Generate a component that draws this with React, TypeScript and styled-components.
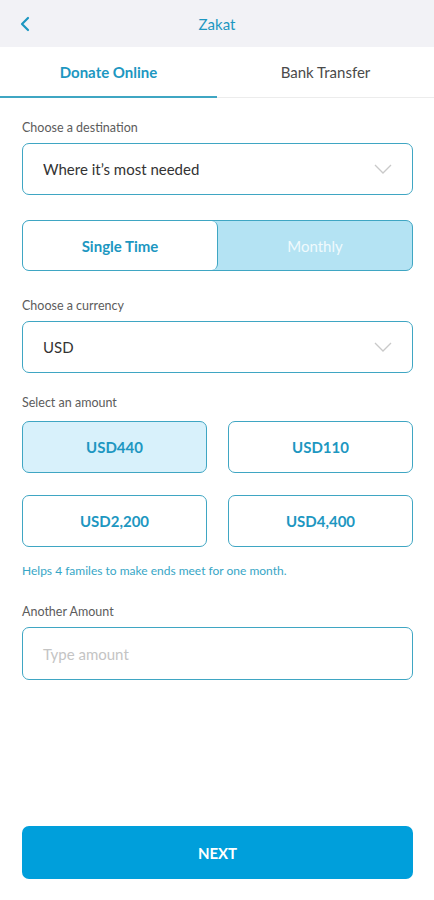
import { createGlobalStyle, styled } from 'styled-components';

const GlobalStyle = createGlobalStyle`
  html, body {
    margin: 0;
    padding: 0;
    background: #fff;
  }
  body {
    font-family: 'Lato', 'Liberation Sans', sans-serif;
    -webkit-font-smoothing: antialiased;
  }
`;

const teal = '#3fa6c3';
const tealText = '#1d97c1';

const Screen = styled.div`
  width: 434px;
  height: 900px;
  display: flex;
  flex-direction: column;
  background: #fff;
`;

const TopBar = styled.header`
  height: 47px;
  background: #f2f2f6;
  display: grid;
  grid-template-columns: 56px 1fr 56px;
  align-items: center;
`;

const BackButton = styled.button`
  border: 0;
  background: none;
  padding: 0 0 0 20px;
  display: flex;
  align-items: center;
`;

const Title = styled.h1`
  margin: 0;
  text-align: center;
  font-size: 15px;
  font-weight: 400;
  color: ${tealText};
`;

const Tabs = styled.nav`
  display: flex;
  height: 50px;
  border-bottom: 1px solid #ececec;
`;

const Tab = styled.div<{ $active?: boolean }>`
  flex: 1;
  display: flex;
  align-items: center;
  justify-content: center;
  font-size: 15px;
  font-weight: ${p => (p.$active ? 700 : 400)};
  color: ${p => (p.$active ? tealText : '#4a4a4a')};
  border-bottom: 2px solid ${p => (p.$active ? teal : 'transparent')};
  margin-bottom: -1px;
`;

const Body = styled.main`
  flex: 1;
  display: flex;
  flex-direction: column;
  padding: 22px 21px 21px 22px;
`;

const Label = styled.div<{ $top?: number; $gap?: number }>`
  font-size: 12.5px;
  color: #5c5c5c;
  margin-top: ${p => p.$top ?? 0}px;
  margin-bottom: ${p => p.$gap ?? 8}px;
  line-height: 15px;
`;

const Field = styled.div<{ $tall?: boolean }>`
  height: ${p => (p.$tall ? 53 : 52)}px;
  box-sizing: border-box;
  border: 1.5px solid ${teal};
  border-radius: 7px;
  display: flex;
  align-items: center;
  justify-content: space-between;
  padding: 0 20px;
  font-size: 15px;
  color: #333;
`;

const Placeholder = styled.span`
  color: #c4c4c4;
`;

const Toggle = styled.div`
  margin-top: 25px;
  height: 51px;
  box-sizing: border-box;
  border: 1.5px solid ${teal};
  border-radius: 7px;
  background: #b4e3f3;
  display: flex;
  overflow: hidden;
`;

const ToggleOption = styled.div<{ $active?: boolean }>`
  flex: 1;
  display: flex;
  align-items: center;
  justify-content: center;
  font-size: 15px;
  font-weight: ${p => (p.$active ? 700 : 400)};
  color: ${p => (p.$active ? tealText : '#f0fafd')};
  background: ${p => (p.$active ? '#fff' : 'transparent')};
  border-right: ${p => (p.$active ? `1.5px solid ${teal}` : 'none')};
  border-radius: ${p => (p.$active ? '6px' : '0')};
`;

const AmountGrid = styled.div`
  display: grid;
  grid-template-columns: 1fr 1fr;
  column-gap: 21px;
  row-gap: 22px;
`;

const AmountButton = styled.div<{ $selected?: boolean }>`
  height: 52px;
  box-sizing: border-box;
  border: 1.5px solid ${teal};
  border-radius: 7px;
  background: ${p => (p.$selected ? '#d8f1fb' : '#fff')};
  display: flex;
  align-items: center;
  justify-content: center;
  font-size: 15px;
  font-weight: 700;
  color: ${tealText};
`;

const Hint = styled.p`
  margin: 16px 0 0;
  font-size: 12px;
  color: #37a6c6;
  line-height: 15px;
`;

const Spacer = styled.div`
  flex: 1;
`;

const NextButton = styled.button`
  height: 53px;
  border: 0;
  border-radius: 7px;
  background: #009fdb;
  color: #fff;
  font-family: inherit;
  font-size: 15px;
  font-weight: 700;
`;

const Chevron = () => (
  <svg width="18" height="10" viewBox="0 0 18 10" fill="none">
    <path d="M1 1l8 8 8-8" stroke="#c9c9c9" strokeWidth="1.3" />
  </svg>
);

const amounts = ['USD440', 'USD110', 'USD2,200', 'USD4,400'];

export default function App() {
  return (
    <>
      <GlobalStyle />
      <Screen>
        <TopBar>
          <BackButton aria-label="Back">
            <svg width="10" height="16" viewBox="0 0 10 16" fill="none">
              <path d="M8 2L2 8l6 6" stroke={tealText} strokeWidth="2.2" strokeLinecap="round" strokeLinejoin="round" />
            </svg>
          </BackButton>
          <Title>Zakat</Title>
          <div />
        </TopBar>
        <Tabs>
          <Tab $active>Donate Online</Tab>
          <Tab>Bank Transfer</Tab>
        </Tabs>
        <Body>
          <Label>Choose a destination</Label>
          <Field>
            <span>Where it’s most needed</span>
            <Chevron />
          </Field>
          <Toggle>
            <ToggleOption $active>Single Time</ToggleOption>
            <ToggleOption>Monthly</ToggleOption>
          </Toggle>
          <Label $top={27}>Choose a currency</Label>
          <Field>
            <span>USD</span>
            <Chevron />
          </Field>
          <Label $top={22} $gap={11}>Select an amount</Label>
          <AmountGrid>
            {amounts.map((a, i) => (
              <AmountButton key={a} $selected={i === 0}>{a}</AmountButton>
            ))}
          </AmountGrid>
          <Hint>Helps 4 familes to make ends meet for one month.</Hint>
          <Label $top={26} $gap={8}>Another Amount</Label>
          <Field $tall>
            <Placeholder>Type amount</Placeholder>
          </Field>
          <Spacer />
          <NextButton>NEXT</NextButton>
        </Body>
      </Screen>
    </>
  );
}
